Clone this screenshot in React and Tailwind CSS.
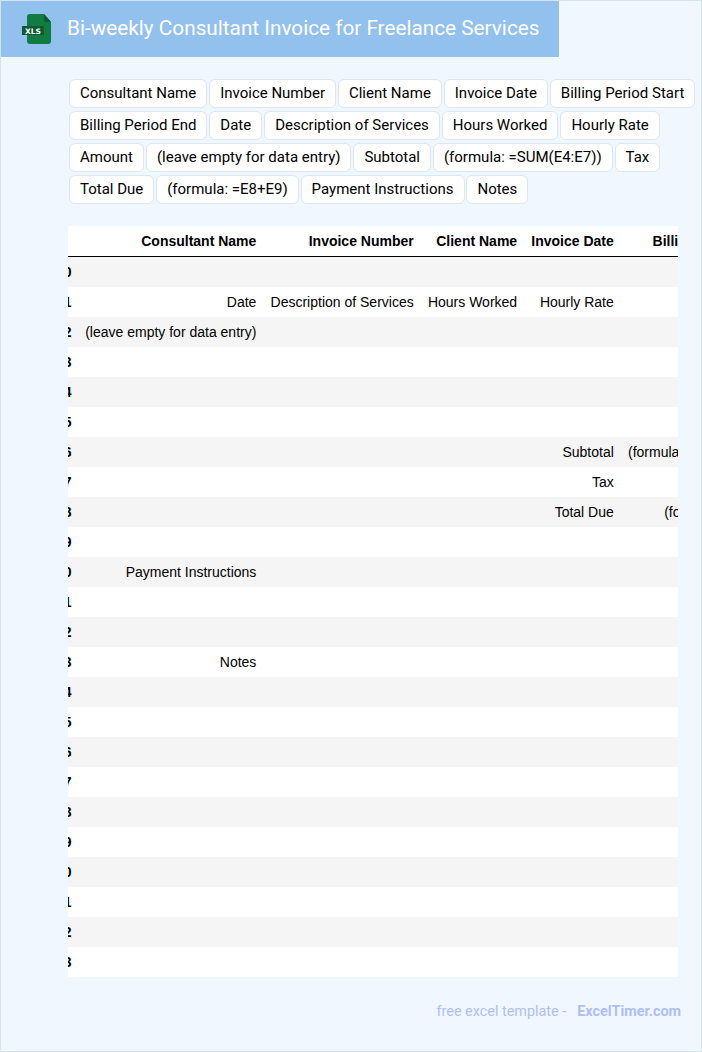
import React from 'react';

const chips = [
  'Consultant Name', 'Invoice Number', 'Client Name', 'Invoice Date', 'Billing Period Start',
  'Billing Period End', 'Date', 'Description of Services', 'Hours Worked', 'Hourly Rate',
  'Amount', '(leave empty for data entry)', 'Subtotal', '(formula: =SUM(E4:E7))', 'Tax',
  'Total Due', '(formula: =E8+E9)', 'Payment Instructions', 'Notes',
];

const columns = ['Consultant Name', 'Invoice Number', 'Client Name', 'Invoice Date', 'Billing Period Start'];

const cells = {
  1: ['Date', 'Description of Services', 'Hours Worked', 'Hourly Rate', 'Amount'],
  2: ['(leave empty for data entry)'],
  6: ['', '', '', 'Subtotal', '(formula: =SUM(E4:E7))'],
  7: ['', '', '', 'Tax'],
  8: ['', '', '', 'Total Due', '(formula: =E8+E9)'],
  10: ['Payment Instructions'],
  13: ['Notes'],
};

const rows = Array.from({ length: 24 }, (_, i) => i);

const XlsIcon = () => (
  <svg width="30" height="32" viewBox="0 0 30 32" className="shrink-0">
    <path d="M8 1h14l7 8v19a3 3 0 0 1-3 3H8a3 3 0 0 1-3-3V4a3 3 0 0 1 3-3z" fill="#107c41" />
    <path d="M22 1l7 8h-5a2 2 0 0 1-2-2z" fill="#0b5c30" />
    <rect x="0" y="13" width="22" height="9" fill="#0b5c30" />
    <text x="11" y="20.5" textAnchor="middle" fontSize="7.5" fontWeight="700" fill="#ffffff" fontFamily="'DejaVu Sans', sans-serif">XLS</text>
  </svg>
);

const App = () => {
  return (
    <div className="w-[702px] h-[1052px] bg-[#f0f7ff] border border-[#d8e3f0] overflow-hidden font-['Roboto',sans-serif]">
      <header className="w-[558px] h-14 bg-[#93c1ed] flex items-center pl-[21px] gap-[15px]">
        <XlsIcon />
        <h1 className="text-[20.75px] leading-6 -mt-[2px] text-white whitespace-nowrap">Bi-weekly Consultant Invoice for Freelance Services</h1>
      </header>

      <div className="flex flex-wrap gap-x-[1.95px] gap-y-[3px] w-[632px] ml-[68px] mt-[22px]">
        {chips.map((chip) => (
          <span key={chip} className="h-[29px] px-[10px] flex items-center bg-white border border-[#dde6f2] rounded-md text-[15px] text-black whitespace-nowrap">
            {chip}
          </span>
        ))}
      </div>

      <div className="w-[610px] ml-[67px] mt-[22px] overflow-hidden bg-white">
        <table className="-ml-[19.3px] border-separate border-spacing-0 font-['Liberation_Sans',sans-serif] text-sm text-black whitespace-nowrap">
          <thead>
            <tr className="h-[31px]">
              <th className="w-[30px] pl-[7.3px] pr-[6.5px] border-b border-black"></th>
              {columns.map((col) => (
                <th key={col} className="px-[7.1px] text-right font-bold border-b border-black">{col}</th>
              ))}
            </tr>
          </thead>
          <tbody>
            {rows.map((row) => (
              <tr key={row} className={row % 2 === 0 ? 'h-[30px] bg-[#f5f5f5]' : 'h-[30px] bg-white'}>
                <th className="pl-[7.3px] pr-[6.5px] text-right font-bold">{row}</th>
                {columns.map((col, i) => (
                  <td key={col} className="px-[7.1px] text-right">{cells[row]?.[i] ?? ''}</td>
                ))}
              </tr>
            ))}
          </tbody>
        </table>
      </div>

      <footer className="mt-[24px] w-[680px] flex justify-end text-[14.4px] text-[#aec0f2] whitespace-nowrap">
        <span>free excel template -</span>
        <span className="ml-[11px] font-bold">ExcelTimer.com</span>
      </footer>
    </div>
  );
};

export default App;
